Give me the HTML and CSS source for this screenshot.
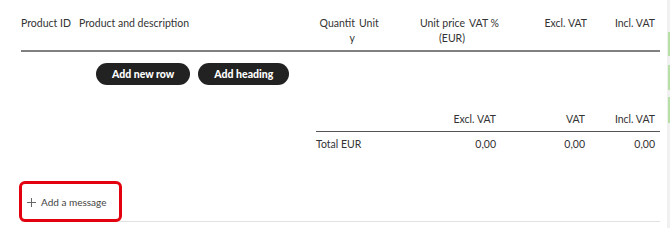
FILE: index.html
```html
<!DOCTYPE html>
<html lang="en">
<head>
  <meta charset="UTF-8">
  <title>Invoice rows</title>
  <link rel="stylesheet" href="styles.css">
</head>
<body>
  <div class="page">
    <div class="rows">
      <div class="row-head">
        <div class="cell">Product ID</div>
        <div class="cell">Product and description</div>
        <div class="cell right qty">Quantity</div>
        <div class="cell">Unit</div>
        <div class="cell right">Unit price (EUR)</div>
        <div class="cell">VAT %</div>
        <div class="cell right">Excl. VAT</div>
        <div class="cell right last">Incl. VAT</div>
      </div>

      <div class="actions">
        <button class="pill">Add new row</button>
        <button class="pill">Add heading</button>
      </div>

      <div class="totals">
        <div class="totals-head">
          <div class="cell"></div>
          <div class="cell right">Excl. VAT</div>
          <div class="cell right">VAT</div>
          <div class="cell right last">Incl. VAT</div>
        </div>
        <div class="totals-row">
          <div class="cell">Total EUR</div>
          <div class="cell right">0,00</div>
          <div class="cell right">0,00</div>
          <div class="cell right last">0,00</div>
        </div>
      </div>

      <div class="message">
        <span class="plus">
          <svg width="9" height="9" viewBox="0 0 9 9">
            <path d="M4.5 0V9M0 4.5H9" stroke="#666" stroke-width="1"/>
          </svg>
        </span>
        <span>Add a message</span>
        <div class="mark"></div>
      </div>
    </div>

    <div class="scroll">
      <div class="tick t1"></div>
      <div class="tick t2"></div>
      <div class="tick t3"></div>
    </div>
  </div>
</body>
</html>
```

FILE: styles.css
```css
body {
  margin: 0;
  font-family: Lato, "Open Sans", sans-serif;
  font-size: 10.5px;
  color: #333;
  background: #fff;
}
.page {
  display: flex;
  height: 228px;
  overflow: hidden;
}
.rows {
  width: 639px;
  margin-left: 21px;
}
.scroll {
  margin-left: auto;
  width: 3px;
  background: #f0f0f0;
  position: relative;
}
.tick {
  position: absolute;
  right: 0;
  width: 2px;
  background: #b9dfa8;
}
.t1 { top: 32px; height: 24px; }
.t2 { top: 65px; height: 25px; }
.t3 { top: 97px; height: 26px; }

.cell {
  padding: 0 2px;
  line-height: 15px;
}
.cell:first-child {
  padding-left: 0;
}
.right {
  text-align: right;
}
.last {
  padding-right: 5px;
}
.qty {
  padding-left: 0;
  overflow-wrap: anywhere;
}

.row-head {
  display: grid;
  grid-template-columns: 56px 241px 39px 43px 67px 53px 69px 71px;
  padding: 16px 0 4px;
  border-bottom: 2px solid #808080;
}

.actions {
  display: flex;
  gap: 8px;
  padding-left: 75px;
  margin-top: 11px;
}
.pill {
  height: 22px;
  padding: 0 16px;
  border: none;
  border-radius: 11px;
  background: #222;
  color: #fff;
  font-family: inherit;
  font-size: 10.5px;
  font-weight: 900;
}

.totals {
  margin: 27px 0 0 295px;
}
.totals-head, .totals-row {
  display: grid;
  grid-template-columns: 84px 98px 89px 73px;
}
.totals-head {
  padding-bottom: 4px;
  border-bottom: 1px solid #555;
}
.totals-row {
  padding-top: 5px;
}

.message {
  position: relative;
  display: flex;
  align-items: center;
  gap: 5px;
  margin-top: 43px;
  padding: 0 0 11px 6px;
  height: 15px;
  line-height: 15px;
  font-size: 10px;
  border-bottom: 1px solid #e2e2e2;
  color: #444;
}
.plus {
  display: flex;
}
.mark {
  position: absolute;
  left: -2px;
  top: -14px;
  width: 97px;
  height: 35px;
  border: 3px solid #e3000f;
  border-radius: 6px;
}
```
